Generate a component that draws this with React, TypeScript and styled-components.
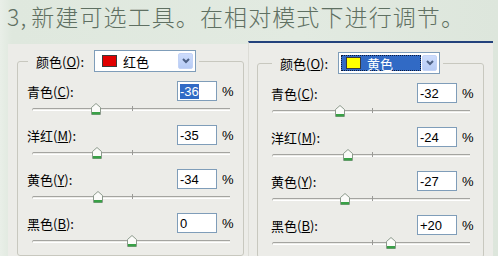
import * as React from "react";
import styled, { createGlobalStyle } from "styled-components";

interface TChannel {
  label: string;
  key: string;
  value: number;
  selected?: boolean;
}

interface TPanel {
  color: string;
  colorName: string;
  active: boolean;
  channels: TChannel[];
}

const panels: TPanel[] = [
  {
    color: "#e00000",
    colorName: "红色",
    active: false,
    channels: [
      { label: "青色", key: "C", value: -36, selected: true },
      { label: "洋红", key: "M", value: -35 },
      { label: "黄色", key: "Y", value: -34 },
      { label: "黑色", key: "B", value: 0 },
    ],
  },
  {
    color: "#ffff00",
    colorName: "黄色",
    active: true,
    channels: [
      { label: "青色", key: "C", value: -32 },
      { label: "洋红", key: "M", value: -24 },
      { label: "黄色", key: "Y", value: -27 },
      { label: "黑色", key: "B", value: 20 },
    ],
  },
];

const formatValue = (v: number) => (v > 0 ? `+${v}` : `${v}`);

const GlobalStyle = createGlobalStyle`
  html, body {
    margin: 0;
    padding: 0;
  }
  body {
    width: 498px;
    height: 256px;
    overflow: hidden;
    background: linear-gradient(90deg, #e9efe8 0px, #dfe8de 12px, #e2eae1 60%, #dde6dc 100%);
    font-family: "Liberation Sans", "Noto Sans CJK SC", sans-serif;
  }
`;

const Page = styled.div`
  display: flex;
  flex-direction: column;
  height: 256px;
`;

const Title = styled.h1`
  margin: 0;
  height: 41px;
  padding-left: 7px;
  font-family: "Noto Sans CJK SC", sans-serif;
  font-weight: 300;
  font-size: 23px;
  line-height: 33px;
  color: #5f7062;
  letter-spacing: 1.1px;
  white-space: nowrap;
`;

const StepNumber = styled.span`
  margin-right: 4px;
`;

const PanelsRow = styled.div`
  display: flex;
  align-items: flex-start;
  padding-left: 8px;
`;

const Panel = styled.div<{ $right?: boolean }>`
  box-sizing: border-box;
  width: ${(p) => (p.$right ? "245px" : "240px")};
  height: ${(p) => (p.$right ? "215px" : "212px")};
  margin-top: ${(p) => (p.$right ? "0" : "3px")};
  padding: ${(p) => (p.$right ? "9px 0 0 8px" : "6px 0 0 9px")};
  background: #ecece8;
  border-top: ${(p) => (p.$right ? "2px solid #23427c" : "none")};
  border-left: ${(p) => (p.$right ? "1px solid #dcdcd6" : "none")};
`;

const Group = styled.fieldset`
  box-sizing: border-box;
  width: 227px;
  margin: 0;
  padding: 9px 0 0 0;
  border: 1px solid #c8c8bf;
  border-radius: 3px;
`;

const Legend = styled.legend<{ $indent: number }>`
  display: flex;
  align-items: center;
  gap: 10px;
  margin-left: ${(p) => p.$indent}px;
  padding: 0 3px 0 8px;
  font-size: 13px;
  color: #000;
`;

const LegendLabel = styled.span`
  font-family: "Noto Sans CJK SC", sans-serif;
`;

const Select = styled.div`
  box-sizing: border-box;
  display: flex;
  width: 102px;
  height: 22px;
  padding: 2px;
  border: 1px solid #7f9db9;
  background: #fff;
`;

const SelectValue = styled.div<{ $active: boolean }>`
  box-sizing: border-box;
  flex: 1;
  display: flex;
  align-items: center;
  gap: 6px;
  padding-left: ${(p) => (p.$active ? "4px" : "5px")};
  background: ${(p) => (p.$active ? "#316ac5" : "transparent")};
  color: ${(p) => (p.$active ? "#fff" : "#000")};
  border: ${(p) => (p.$active ? "1px dotted #0b1a3a" : "none")};
  font-family: "Noto Sans CJK SC", sans-serif;
  font-size: 13px;
`;

const Swatch = styled.span<{ $color: string }>`
  box-sizing: border-box;
  width: 15px;
  height: 12px;
  background: ${(p) => p.$color};
  border: 1px solid #3a3a3a;
`;

const ArrowButton = styled.div`
  width: 15px;
  margin-left: 1px;
  display: flex;
  align-items: center;
  justify-content: center;
  border-radius: 2px;
  background: linear-gradient(#cddcfc, #b6cbf5);
  border: 1px solid #c3d3f6;
  box-sizing: border-box;
`;

const Field = styled.div`
  & + & {
    margin-top: 2px;
  }
`;

const LabelRow = styled.div<{ $indent: number }>`
  display: flex;
  align-items: center;
  height: 20px;
  padding-left: ${(p) => p.$indent}px;
  padding-right: 9px;
  font-size: 13px;
  color: #000;
`;

const Label = styled.span`
  flex: 1;
  font-family: "Noto Sans CJK SC", sans-serif;
  font-size: 13px;
`;

const NumberBox = styled.div`
  box-sizing: border-box;
  width: 40px;
  height: 20px;
  padding-left: 2px;
  display: flex;
  align-items: center;
  border: 1px solid #7f9db9;
  background: #fff;
  font-size: 13px;
`;

const Selected = styled.span`
  background: #316ac5;
  color: #fff;
  line-height: 15px;
`;

const Percent = styled.span`
  width: 12px;
  margin-left: 5px;
  font-size: 13px;
`;

const SliderRow = styled.div`
  height: 22px;
  padding-top: 7px;
  box-sizing: border-box;
`;

const Track = styled.div`
  position: relative;
  height: 1px;
  margin: 0 13px 0 14px;
  border-top: 1px solid #a4a4a0;
  border-bottom: 1px solid #fff;
  border-left: 1px solid #b8b8b4;
  border-radius: 2px 0 0 2px;
`;

const Tick = styled.span`
  position: absolute;
  left: 50%;
  top: -3px;
  width: 1px;
  height: 5px;
  background: #9a9a96;
`;

const Thumb = styled.svg`
  position: absolute;
  top: -6px;
  width: 10px;
  height: 12px;
  transform: translateX(-50%);
`;

const Chevron = () => (
  <svg width="8" height="6" viewBox="0 0 8 6">
    <path d="M1 1 L4 4 L7 1" fill="none" stroke="#4d6185" strokeWidth="2" />
  </svg>
);

const Slider: React.FunctionComponent<{ value: number }> = ({ value }) => (
  <SliderRow>
    <Track>
      <Tick />
      <Thumb viewBox="0 0 10 12" style={{ left: `${50 + value / 2}%` }}>
        <path d="M0.5 4.5 L5 0.5 L9.5 4.5 V11.5 H0.5 Z" fill="#fbfbf9" stroke="#8c9a8c" />
        <rect x="1" y="9" width="8" height="2.5" fill="#39a046" />
      </Thumb>
    </Track>
  </SliderRow>
);

const SelectiveColorPanel: React.FunctionComponent<{ panel: TPanel; right?: boolean }> = ({
  panel,
  right,
}) => (
  <Panel $right={right}>
    <Group>
      <Legend $indent={right ? 14 : 10}>
        <LegendLabel>
          颜色(<u>O</u>):
        </LegendLabel>
        <Select>
          <SelectValue $active={panel.active}>
            <Swatch $color={panel.color} />
            {panel.colorName}
          </SelectValue>
          <ArrowButton>
            <Chevron />
          </ArrowButton>
        </Select>
      </Legend>
      {panel.channels.map((ch) => (
        <Field key={ch.key}>
          <LabelRow $indent={right ? 13 : 9}>
            <Label>
              {ch.label}(<u>{ch.key}</u>):
            </Label>
            <NumberBox>
              {ch.selected ? <Selected>{formatValue(ch.value)}</Selected> : formatValue(ch.value)}
            </NumberBox>
            <Percent>%</Percent>
          </LabelRow>
          <Slider value={ch.value} />
        </Field>
      ))}
    </Group>
  </Panel>
);

export default function App() {
  return (
    <>
      <GlobalStyle />
      <Page>
        <Title>
          <StepNumber>3,</StepNumber>新建可选工具。在相对模式下进行调节。
        </Title>
        <PanelsRow>
          <SelectiveColorPanel panel={panels[0]} />
          <SelectiveColorPanel panel={panels[1]} right />
        </PanelsRow>
      </Page>
    </>
  );
}
